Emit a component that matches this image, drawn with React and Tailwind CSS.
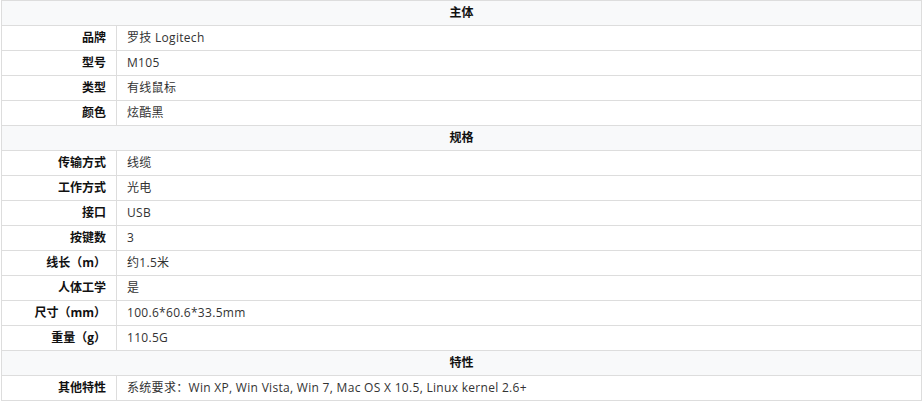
import React from 'react';

const sections = [
  {
    title: '主体',
    rows: [
      ['品牌', '罗技 Logitech'],
      ['型号', 'M105'],
      ['类型', '有线鼠标'],
      ['颜色', '炫酷黑'],
    ],
  },
  {
    title: '规格',
    rows: [
      ['传输方式', '线缆'],
      ['工作方式', '光电'],
      ['接口', 'USB'],
      ['按键数', '3'],
      ['线长（m）', '约1.5米'],
      ['人体工学', '是'],
      ['尺寸（mm）', '100.6*60.6*33.5mm'],
      ['重量（g）', '110.5G'],
    ],
  },
  {
    title: '特性',
    rows: [['其他特性', '系统要求：Win XP, Win Vista, Win 7, Mac OS X 10.5, Linux kernel 2.6+']],
  },
];

const App = () => {
  return (
    <div className="bg-white w-[924px] h-[402px] pl-px" style={{ fontFamily: '"Open Sans", "Noto Sans CJK SC", sans-serif' }}>
      <table className="w-[921px] border-collapse text-[12px] text-[#333]">
        <tbody>
          {sections.map((section) => (
            <React.Fragment key={section.title}>
              <tr>
                <th colSpan={2} className="h-[25px] p-0 border border-[#ddd] bg-[#f8f9fa] text-center font-bold text-[#111]">
                  {section.title}
                </th>
              </tr>
              {section.rows.map(([label, value]) => (
                <tr key={label}>
                  <td className="w-[115px] h-[25px] p-0 pr-[10px] border border-[#ddd] text-right font-bold text-[#111]">
                    {label}
                  </td>
                  <td className="h-[25px] p-0 pl-[10px] border border-[#ddd] text-left tracking-[0.3px]">
                    {value}
                  </td>
                </tr>
              ))}
            </React.Fragment>
          ))}
        </tbody>
      </table>
    </div>
  );
};

export default App;
